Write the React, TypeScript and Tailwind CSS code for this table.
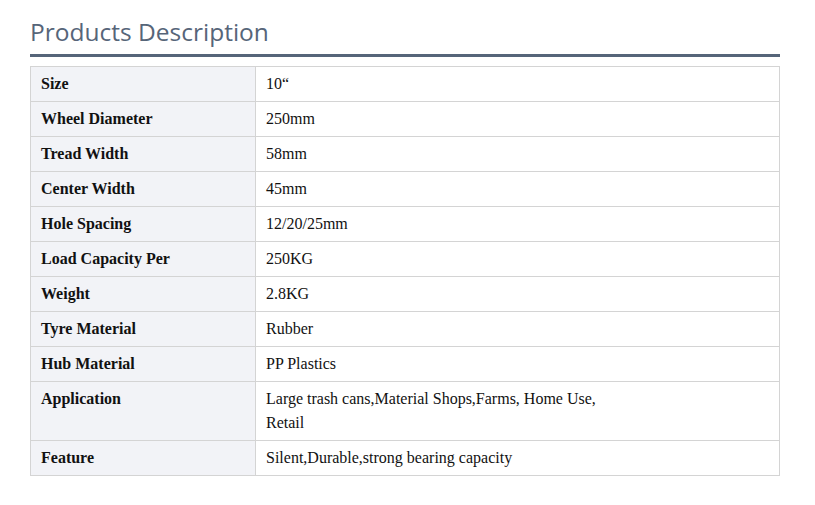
import React from "react";

const rows: [string, React.ReactNode][] = [
  ["Size", "10“"],
  ["Wheel Diameter", "250mm"],
  ["Tread Width", "58mm"],
  ["Center Width", "45mm"],
  ["Hole Spacing", "12/20/25mm"],
  ["Load Capacity Per", "250KG"],
  ["Weight", "2.8KG"],
  ["Tyre Material", "Rubber"],
  ["Hub Material", "PP Plastics"],
  [
    "Application",
    <>
      Large trash cans,Material Shops,Farms, Home Use,
      <br />
      Retail
    </>,
  ],
  ["Feature", "Silent,Durable,strong bearing capacity"],
];

export default function App() {
  return (
    <div className="w-[815px] h-[505px] bg-white pl-[30px] pr-[35px] pt-[16px]">
      <h2
        className="text-[24.5px] leading-[32px] text-[#566579] pb-[6px] border-b-[3px] border-[#566579]"
        style={{ fontFamily: '"Open Sans", sans-serif' }}
      >
        Products Description
      </h2>
      <table
        className="mt-[9px] w-full border-collapse text-[16px] leading-[24px] text-[#111]"
        style={{ fontFamily: '"Liberation Serif", serif' }}
      >
        <tbody>
          {rows.map(([k, v]) => (
            <tr key={k}>
              <td className="w-[225px] border border-[#d4d4d4] bg-[#f2f3f7] px-[10px] py-[5px] align-top font-bold">
                {k}
              </td>
              <td className="border border-[#d4d4d4] px-[10px] py-[5px] align-top">
                {v}
              </td>
            </tr>
          ))}
        </tbody>
      </table>
    </div>
  );
}
